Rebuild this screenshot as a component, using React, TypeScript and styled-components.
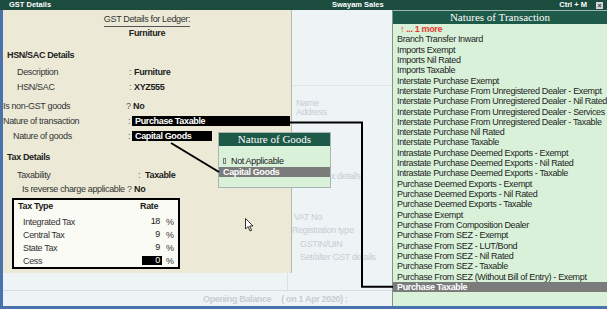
import React from "react";
import styled, { createGlobalStyle } from "styled-components";

const BODYFONT = `"Liberation Sans", Arial, sans-serif`;
const SERIF = `"Liberation Serif", "Times New Roman", serif`;
const SANS = `"Liberation Sans", Arial, sans-serif`;

const GREEN_DARK = "#1b4c3e";
const GREEN_HEAD = "#1d5a48";
const LIST_BG = "#d9f1d9";
const BEIGE = "#ecead6";
const BG = "#eef3f5";
const BLUE = "#4a72ad";
const SEL = "#7b7b7b";
const FADED = "#c6ced3";

const Global = createGlobalStyle`
  html, body { margin: 0; padding: 0; background: ${BG}; }
  body { width: 607px; height: 309px; overflow: hidden; }
  * { box-sizing: border-box; }
`;

const Window = styled.div`
  position: relative;
  width: 607px;
  height: 309px;
  display: flex;
  flex-direction: column;
  background: ${BG};
  font-family: ${BODYFONT};
  font-size: 9px;
  letter-spacing: -0.35px;
  color: #262626;
  overflow: hidden;
`;

const TitleBar = styled.div`
  height: 10px;
  flex: none;
  display: flex;
  align-items: center;
  background: ${GREEN_DARK};
  color: #ffffff;
  font-family: ${SANS};
  font-size: 7.5px;
  letter-spacing: 0;
  font-weight: bold;
  line-height: 10px;
  white-space: nowrap;
`;

const TitleLeft = styled.div`
  width: 332px;
  padding-left: 9px;
`;

const TitleCenter = styled.div`
  flex: 1;
`;

const TitleKey = styled.div`
  margin-right: 9px;
`;

const CloseBox = styled.div`
  width: 7px;
  height: 7px;
  margin-right: 4px;
  background: #d4d6d8;
  color: #333;
  font-size: 7px;
  line-height: 7px;
  text-align: center;
`;

const Main = styled.div`
  flex: 1;
  display: flex;
  border-left: 3px solid ${BLUE};
  min-height: 0;
`;

const BottomEdge = styled.div`
  height: 3px;
  flex: none;
  background: ${BLUE};
`;

const LeftArea = styled.div`
  width: 389px;
  display: flex;
  flex-direction: column;
`;

const TopRow = styled.div`
  height: 263px;
  display: flex;
`;

const Beige = styled.div`
  width: 289px;
  background: ${BEIGE};
  border-right: 1px solid #b8b8a6;
  display: flex;
  flex-direction: column;
  white-space: nowrap;
`;

const TitleWrap = styled.div`
  text-align: center;
  margin-top: 3px;
  height: 14px;
`;

const LedgerTitle = styled.span`
  display: inline-block;
  line-height: 13px;
  border-bottom: 1px solid #555;
  color: #333;
`;

const LedgerName = styled.div`
  text-align: center;
  line-height: 12px;
  height: 12px;
  font-weight: bold;
  color: #222;
`;

const Heading = styled.div<{ $mt: number }>`
  margin-top: ${(p) => p.$mt}px;
  height: 12px;
  line-height: 12px;
  padding-left: 4px;
  font-weight: bold;
  color: #222;
`;

const Row = styled.div<{ $mt: number; $cols: string }>`
  display: grid;
  grid-template-columns: ${(p) => p.$cols};
  margin-top: ${(p) => p.$mt}px;
  height: 12px;
  line-height: 12px;
`;

const Label = styled.span<{ $indent: number }>`
  padding-left: ${(p) => p.$indent}px;
  color: #333;
`;

const Sep = styled.span`
  color: #555;
`;

const Value = styled.span`
  font-weight: bold;
  color: #1c1c1c;
`;

const Field = styled.span<{ $w: number }>`
  display: block;
  width: ${(p) => p.$w}px;
  height: 10px;
  margin-top: 1px;
  padding-left: 3px;
  background: #000;
  color: #fff;
  font-weight: bold;
  line-height: 10px;
`;

const TaxTable = styled.div`
  margin: 3px 0 0 9px;
  width: 168px;
  height: 71px;
  border: 2px solid #000;
  background: #fbfbf6;
  display: flex;
  flex-direction: column;
`;

const TableHead = styled.div`
  display: grid;
  grid-template-columns: 1fr 38px;
  height: 12px;
  line-height: 12px;
  padding-left: 4px;
  margin-bottom: 3px;
  font-weight: bold;
  color: #1c1c1c;
`;

const TaxRow = styled.div`
  display: grid;
  grid-template-columns: 128px 20px 16px;
  align-items: center;
  height: 13px;
  line-height: 12px;
`;

const TaxLabel = styled.span`
  padding-left: 9px;
  color: #333;
`;

const TaxValue = styled.span<{ $active?: boolean }>`
  text-align: right;
  padding-right: 2px;
  height: 9px;
  line-height: 9px;
  background: ${(p) => (p.$active ? "#000" : "transparent")};
  color: ${(p) => (p.$active ? "#fff" : "#222")};
`;

const Percent = styled.span`
  padding-left: 4px;
  color: #333;
`;

const Mid = styled.div`
  width: 100px;
  display: flex;
  flex-direction: column;
  overflow: hidden;
  white-space: nowrap;
  color: ${FADED};
`;

const MidRule = styled.div`
  margin-top: 75px;
  height: 1px;
  background: #e0e6e9;
`;

const MidText = styled.div<{ $mt: number; $indent: number; $lh?: number }>`
  margin-top: ${(p) => p.$mt}px;
  padding-left: ${(p) => p.$indent}px;
  height: ${(p) => p.$lh ?? 12}px;
  line-height: ${(p) => p.$lh ?? 12}px;
`;

const Footer = styled.div`
  flex: 1;
  display: flex;
  flex-direction: column;
`;

const FooterTop = styled.div`
  height: 18px;
  display: flex;
  border-bottom: 1px solid #d6dde1;
`;

const FooterCell = styled.div`
  width: 285px;
  border-right: 1px solid #dbe1e4;
`;

const FooterText = styled.div`
  flex: 1;
  display: flex;
  align-items: center;
  gap: 10px;
  padding-left: 200px;
  color: ${FADED};
  font-weight: bold;
  white-space: nowrap;
`;

const RightPanel = styled.div`
  flex: 1;
  display: flex;
  flex-direction: column;
  background: ${LIST_BG};
  border-left: 1px solid #7f948e;
  white-space: nowrap;
`;

const PanelHeader = styled.div`
  height: 14px;
  flex: none;
  background: ${GREEN_HEAD};
  border-top: 1px solid #9fb8ad;
  color: #fff;
  font-family: ${SERIF};
  font-size: 11px;
  letter-spacing: 0;
  line-height: 13px;
  text-align: center;
`;

const List = styled.div`
  display: flex;
  flex-direction: column;
`;

const Item = styled.div<{ $selected?: boolean }>`
  height: 10.32px;
  line-height: 10.32px;
  padding-left: 4px;
  color: ${(p) => (p.$selected ? "#fff" : "#1e1e1e")};
  background: ${(p) => (p.$selected ? SEL : "transparent")};
  font-weight: ${(p) => (p.$selected ? "bold" : "normal")};
`;

const More = styled.div`
  height: 10.32px;
  line-height: 10.32px;
  padding-left: 7px;
  color: #e23a2e;
  font-weight: bold;
  display: flex;
  gap: 2px;
`;

const Arrow = styled.span`
  font-weight: normal;
`;

const Popup = styled.div`
  position: absolute;
  left: 218px;
  top: 132px;
  width: 113px;
  height: 56px;
  border: 1px solid #a9b5b0;
  background: ${LIST_BG};
  display: flex;
  flex-direction: column;
  white-space: nowrap;
`;

const PopupHeader = styled.div`
  height: 13px;
  background: ${GREEN_HEAD};
  color: #fff;
  font-family: ${SERIF};
  font-size: 11px;
  letter-spacing: 0;
  line-height: 13px;
  text-align: center;
`;

const PopupItem = styled.div<{ $selected?: boolean; $mt: number }>`
  margin-top: ${(p) => p.$mt}px;
  height: 10px;
  line-height: 10px;
  display: flex;
  align-items: center;
  gap: 5px;
  padding-left: 4px;
  background: ${(p) => (p.$selected ? SEL : "transparent")};
  color: ${(p) => (p.$selected ? "#fff" : "#222")};
  font-weight: ${(p) => (p.$selected ? "bold" : "normal")};
`;

const Marker = styled.span`
  width: 3px;
  height: 6px;
  border: 1px solid #777;
`;

const Overlay = styled.svg`
  position: absolute;
  left: 0;
  top: 0;
  pointer-events: none;
`;

const natures = [
  "Branch Transfer Inward",
  "Imports Exempt",
  "Imports Nil Rated",
  "Imports Taxable",
  "Interstate Purchase Exempt",
  "Interstate Purchase From Unregistered Dealer - Exempt",
  "Interstate Purchase From Unregistered Dealer - Nil Rated",
  "Interstate Purchase From Unregistered Dealer - Services",
  "Interstate Purchase From Unregistered Dealer - Taxable",
  "Interstate Purchase Nil Rated",
  "Interstate Purchase Taxable",
  "Intrastate Purchase Deemed Exports - Exempt",
  "Intrastate Purchase Deemed Exports - Nil Rated",
  "Intrastate Purchase Deemed Exports - Taxable",
  "Purchase Deemed Exports - Exempt",
  "Purchase Deemed Exports - Nil Rated",
  "Purchase Deemed Exports - Taxable",
  "Purchase Exempt",
  "Purchase From Composition Dealer",
  "Purchase From SEZ - Exempt",
  "Purchase From SEZ - LUT/Bond",
  "Purchase From SEZ - Nil Rated",
  "Purchase From SEZ - Taxable",
  "Purchase From SEZ (Without Bill of Entry) - Exempt",
  "Purchase Taxable",
];

const taxes = [
  { name: "Integrated Tax", rate: "18" },
  { name: "Central Tax", rate: "9" },
  { name: "State Tax", rate: "9" },
  { name: "Cess", rate: "0", active: true },
];

export default function App() {
  return (
    <>
      <Global />
      <Window>
        <TitleBar>
          <TitleLeft>GST Details</TitleLeft>
          <TitleCenter>Swayam Sales</TitleCenter>
          <TitleKey>Ctrl + M</TitleKey>
          <CloseBox>×</CloseBox>
        </TitleBar>
        <Main>
          <LeftArea>
            <TopRow>
              <Beige>
                <TitleWrap>
                  <LedgerTitle>GST Details for Ledger:</LedgerTitle>
                </TitleWrap>
                <LedgerName>Furniture</LedgerName>
                <Heading $mt={10}>HSN/SAC Details</Heading>
                <Row $mt={5} $cols="126px 5px 1fr">
                  <Label $indent={14}>Description</Label>
                  <Sep>:</Sep>
                  <Value>Furniture</Value>
                </Row>
                <Row $mt={3} $cols="126px 5px 1fr">
                  <Label $indent={14}>HSN/SAC</Label>
                  <Sep>:</Sep>
                  <Value>XYZ555</Value>
                </Row>
                <Row $mt={7} $cols="123px 7px 1fr">
                  <Label $indent={0}>Is non-GST goods</Label>
                  <Sep>?</Sep>
                  <Value>No</Value>
                </Row>
                <Row $mt={3} $cols="125px 4px 1fr">
                  <Label $indent={0}>Nature of transaction</Label>
                  <Sep>:</Sep>
                  <Field $w={158}>Purchase Taxable</Field>
                </Row>
                <Row $mt={3} $cols="125px 4px 1fr">
                  <Label $indent={10}>Nature of goods</Label>
                  <Sep>:</Sep>
                  <Field $w={80}>Capital Goods</Field>
                </Row>
                <Heading $mt={9}>Tax Details</Heading>
                <Row $mt={6} $cols="135px 7px 1fr">
                  <Label $indent={14}>Taxability</Label>
                  <Sep>:</Sep>
                  <Value>Taxable</Value>
                </Row>
                <Row $mt={2} $cols="124px 7px 1fr">
                  <Label $indent={19}>Is reverse charge applicable</Label>
                  <Sep>?</Sep>
                  <Value>No</Value>
                </Row>
                <TaxTable>
                  <TableHead>
                    <span>Tax Type</span>
                    <span>Rate</span>
                  </TableHead>
                  {taxes.map((t) => (
                    <TaxRow key={t.name}>
                      <TaxLabel>{t.name}</TaxLabel>
                      <TaxValue $active={t.active}>{t.rate}</TaxValue>
                      <Percent>%</Percent>
                    </TaxRow>
                  ))}
                </TaxTable>
              </Beige>
              <Mid>
                <MidRule />
                <MidText $mt={13} $indent={4} $lh={9}>Name</MidText>
                <MidText $mt={0} $indent={4} $lh={9}>Address</MidText>
                <MidText $mt={53} $indent={30}>Tax details</MidText>
                <MidText $mt={29} $indent={2}>VAT No</MidText>
                <MidText $mt={1} $indent={0}>Registration type</MidText>
                <MidText $mt={2} $indent={8}>GSTIN/UIN</MidText>
                <MidText $mt={1} $indent={8}>Set/alter GST details</MidText>
              </Mid>
            </TopRow>
            <Footer>
              <FooterTop>
                <FooterCell />
              </FooterTop>
              <FooterText>
                <span>Opening Balance</span>
                <span>( on 1 Apr 2020) :</span>
              </FooterText>
            </Footer>
          </LeftArea>
          <RightPanel>
            <PanelHeader>Natures of Transaction</PanelHeader>
            <List>
              <More>
                <Arrow>↑</Arrow>
                <span>... 1 more</span>
              </More>
              {natures.map((n, i) => (
                <Item key={n} $selected={i === natures.length - 1}>
                  {n}
                </Item>
              ))}
            </List>
          </RightPanel>
        </Main>
        <BottomEdge />

        <Popup>
          <PopupHeader>Nature of Goods</PopupHeader>
          <PopupItem $mt={10}>
            <Marker />
            <span>Not Applicable</span>
          </PopupItem>
          <PopupItem $mt={1} $selected>
            <span>Capital Goods</span>
          </PopupItem>
        </Popup>

        <Overlay width="607" height="309" viewBox="0 0 607 309">
          <polyline
            points="289,122.5 362,122.5 362,286.7 393,286.7"
            fill="none"
            stroke="#000"
            strokeWidth="2"
          />
          <line x1="171" y1="143" x2="219" y2="172" stroke="#000" strokeWidth="2" />
          <path
            d="M245.5 218.5 L245.5 229 L248 226.5 L250 231 L251.6 230.3 L249.7 226 L253 226 Z"
            fill="#fff"
            stroke="#000"
            strokeWidth="0.8"
            strokeLinejoin="round"
          />
        </Overlay>
      </Window>
    </>
  );
}
